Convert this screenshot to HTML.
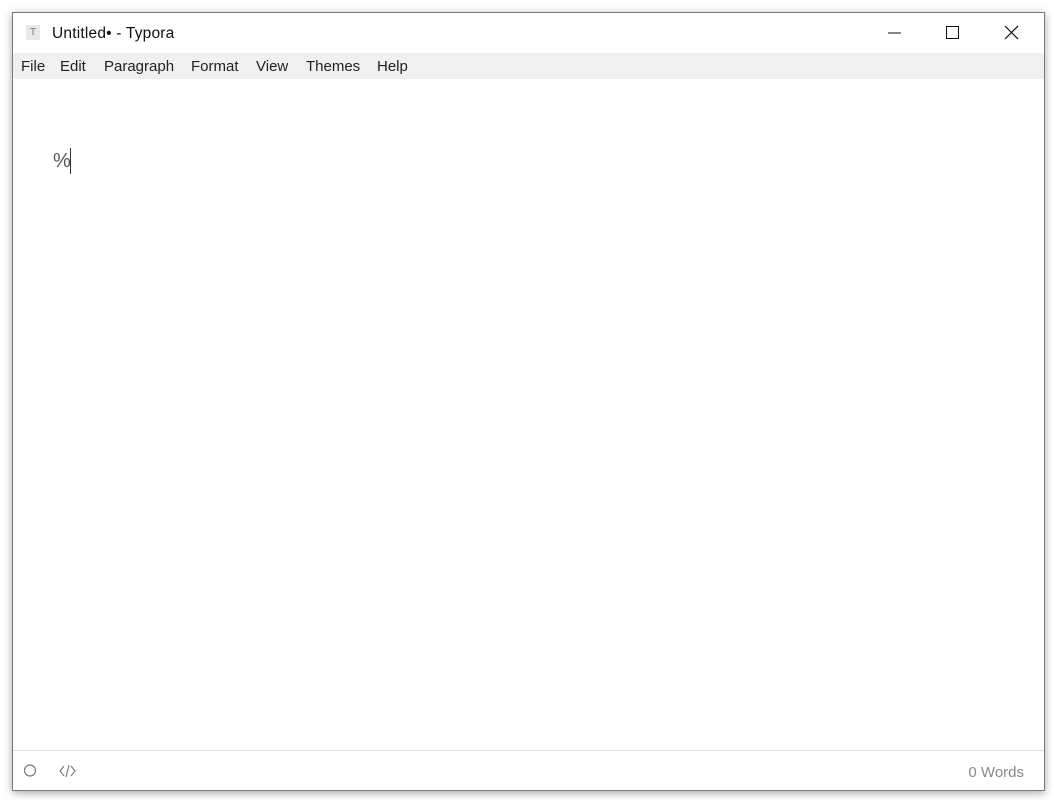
<!DOCTYPE html>
<html><head><style>
body{margin:0;width:1054px;height:800px;background:#fff;position:relative;overflow:hidden;font-family:"Liberation Sans",sans-serif;}
.win{position:absolute;left:12px;top:12px;width:1031px;height:777px;border:1px solid #7a7a7a;background:#fff;box-shadow:0 2px 8px rgba(0,0,0,.35);}
.title{position:absolute;left:0;top:0;right:0;height:40px;}
.ticon{position:absolute;left:13px;top:12px;width:14px;height:15px;background:#e8e8e8;font-size:10px;color:#777;text-align:center;line-height:15px;}
.ttext{position:absolute;left:39px;top:12px;font-size:15.5px;color:#111;letter-spacing:0.2px;}
.menu{position:absolute;left:0;top:40px;right:0;height:26px;background:#f0f0f0;font-size:15px;color:#222;}
.menu span{position:absolute;top:5px;}
.status{position:absolute;left:0;right:0;bottom:0;height:39px;border-top:1px solid #e0e0e0;}
</style></head><body>
<div class="win">
 <div class="title">
  <div class="ticon">T</div>
  <div class="ttext">Untitled• - Typora</div>
  <svg style="position:absolute;left:870px;top:10px" width="150" height="20">
   <line x1="5" y1="10" x2="18" y2="10" stroke="#111" stroke-width="1"/>
   <rect x="63.5" y="3.5" width="12" height="12" fill="none" stroke="#111" stroke-width="1"/>
   <path d="M122 3 L135 16 M135 3 L122 16" stroke="#111" stroke-width="1.2"/>
  </svg>
 </div>
 <div class="menu">
  <span style="left:8px">File</span><span style="left:47px">Edit</span><span style="left:91px">Paragraph</span><span style="left:178px">Format</span><span style="left:243px">View</span><span style="left:293px">Themes</span><span style="left:364px">Help</span>
 </div>
 <div style="position:absolute;left:40px;top:137px;font-size:20px;color:#555">%</div>
 <div style="position:absolute;left:57px;top:135px;width:1px;height:26px;background:#333"></div>
 <div class="status">
  <svg style="position:absolute;left:10px;top:12px" width="70" height="16">
   <circle cx="7" cy="7.5" r="5.5" fill="none" stroke="#777" stroke-width="1.2"/>
   <path d="M41 3 L37 8 L41 13 M46 2 L43 14 M48 3 L52 8 L48 13" fill="none" stroke="#777" stroke-width="1.1"/>
  </svg>
  <div style="position:absolute;right:20px;top:13px;font-size:15px;color:#888">0 Words</div>
 </div>
</div>
</body></html>
